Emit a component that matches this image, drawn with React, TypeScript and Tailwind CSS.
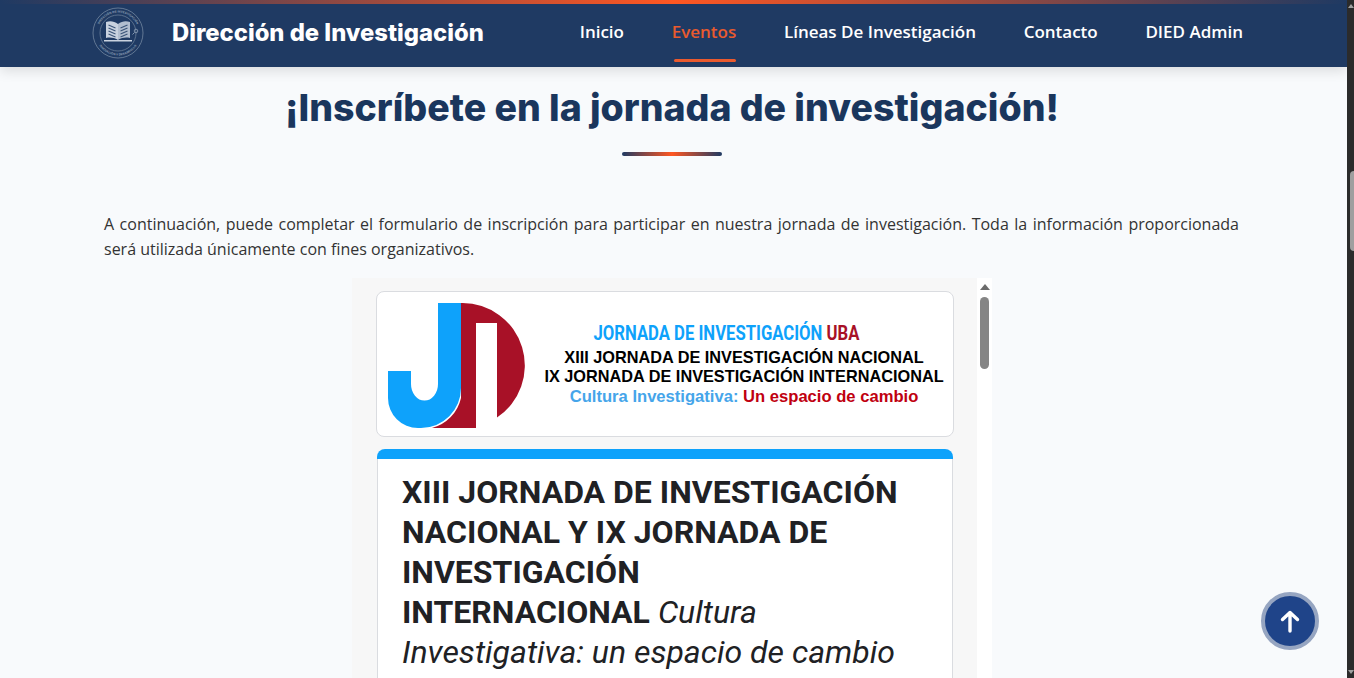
import React from "react";

function Seal() {
  return (
    <svg width="52" height="52" viewBox="0 0 52 52" className="shrink-0">
      <defs>
        <path id="sealTop" d="M5.500 26a20.500 20.500 0 0 1 41 0" />
        <path id="sealBottom" d="M3.500 26a22.500 22.500 0 0 0 45 0" />
      </defs>
      <circle cx="26" cy="26" r="25" fill="none" stroke="#72869f" strokeWidth="0.8" />
      <circle cx="26" cy="26" r="18" fill="none" stroke="#72869f" strokeWidth="0.7" />
      <text fontSize="3" fill="#8fa1b8" fontFamily="'Liberation Sans', sans-serif" fontWeight="700" textAnchor="middle">
        <textPath href="#sealTop" startOffset="50%">DIRECCIÓN DE INVESTIGACIÓN</textPath>
      </text>
      <text fontSize="3" fill="#8fa1b8" fontFamily="'Liberation Sans', sans-serif" fontWeight="700" textAnchor="middle">
        <textPath href="#sealBottom" startOffset="50%">INNOVACIÓN Y DESARROLLO</textPath>
      </text>
      <path d="M14 15c4-1.500 8-1 12 2v16c-4-2.500-8-3-12-2z" fill="#c9d2df" />
      <path d="M38 15c-4-1.500-8-1-12 2v16c4-2.500 8-3 12-2z" fill="#b2becf" />
      <path d="M16.500 18l7 3M16.500 21l7 3M16.500 24l7 3M16.500 27l7 3M35.500 18l-7 3M35.500 21l-7 3M35.500 24l-7 3M35.500 27l-7 3" stroke="#3a5478" strokeWidth="1.100" />
      <path d="M12 33h28v1.500H12z" fill="#c9d2df" />
      <circle cx="44" cy="24" r="1.800" fill="none" stroke="#8fa1b8" strokeWidth="0.8" />
      <path d="M42.500 25.500l-2 2" stroke="#8fa1b8" strokeWidth="0.9" />
    </svg>
  );
}

function JLogo() {
  return (
    <svg width="138" height="126" viewBox="387 303 138 126" className="mt-1 shrink-0">
      <path d="M461 303h1a62.500 62.500 0 0 1 35 114.500V323h-21v105h-44a40 40 0 0 0 29-30z" fill="#a81127" />
      <path d="M438 303h23v85a40 40 0 0 1-40 40h-3a30 30 0 0 1-30-30v-27h23v13a13.500 16.500 0 0 0 27 0z" fill="#0ea2fb" />
    </svg>
  );
}

function NavLink({ label, active }: { label: string; active?: boolean }) {
  return (
    <a className={active ? "relative -mt-[4px] text-[#ea5a2e]" : "relative -mt-[4px] text-white"}>
      {label}
      {active && <span className="absolute left-[2px] right-0 top-[36px] h-[3px] rounded-sm bg-[#ea5a2e]" />}
    </a>
  );
}

export default function App() {
  return (
    <div className="flex h-[678px] w-full overflow-hidden bg-[#f8fafc] font-['Open_Sans',sans-serif]">
      <main className="relative h-full min-w-0 flex-1 overflow-hidden">
        <header className="relative z-10 h-[67px] bg-[#1f3a63] shadow-[0_4px_12px_rgba(0,0,0,0.12)]">
          <div className="h-1 bg-[linear-gradient(90deg,#1f3a63,#ff5722,#1f3a63)]" />
          <div className="flex h-[58px] items-center pl-[92px]">
            <Seal />
            <span className="ml-7 font-['Inter',sans-serif] text-[23.800px] font-extrabold leading-none text-white">
              Dirección de Investigación
            </span>
            <nav className="ml-auto mr-[104px] flex gap-[47.700px] text-[17px] font-semibold leading-none">
              <NavLink label="Inicio" />
              <NavLink label="Eventos" active />
              <NavLink label="Líneas De Investigación" />
              <NavLink label="Contacto" />
              <NavLink label="DIED Admin" />
            </nav>
          </div>
        </header>

        <section className="ml-[104px] w-[1136px]">
          <h1 className="mt-[19px] text-center font-['Inter',sans-serif] text-[37.500px] font-extrabold leading-[44px] text-[#1a365d]">
            ¡Inscríbete en la jornada de investigación!
          </h1>
          <div className="mx-auto mt-[22px] h-1 w-[100px] rounded-sm bg-[linear-gradient(90deg,#1f3a63,#ff5722,#1f3a63)]" />
          <p className="mr-px mt-[56px] text-justify text-base leading-[25px] text-[#333333]">
            A continuación, puede completar el formulario de inscripción para participar en nuestra jornada de investigación. Toda la información proporcionada será utilizada únicamente con fines organizativos.
          </p>

          <div className="mx-auto mt-[16px] flex h-[500px] w-[640px] bg-[#f7f7f7]">
            <div className="min-w-0 flex-1 pl-6 pr-[23px] pt-[13px]">
              <div className="flex h-[146px] items-center rounded-lg border border-[#dadce0] bg-white pl-[10px]">
                <JLogo />
                <div className="ml-[19px] flex w-[400px] flex-col items-center font-['Liberation_Sans',sans-serif] text-[16.300px] font-bold text-black">
                  <span className="-translate-x-[18px] -translate-y-[2px] scale-x-[0.834] whitespace-nowrap font-['Roboto',sans-serif] text-[20px] leading-[26px] text-[#0ea2fb]">
                    JORNADA DE INVESTIGACIÓN <span className="text-[#a81127]">UBA</span>
                  </span>
                  <span className="whitespace-nowrap leading-[19px]">XIII JORNADA DE INVESTIGACIÓN NACIONAL</span>
                  <span className="whitespace-nowrap leading-[19px]">IX JORNADA DE INVESTIGACIÓN INTERNACIONAL</span>
                  <span className="translate-y-px whitespace-nowrap text-[16.600px] leading-[20px] text-[#45a5ea]">
                    Cultura Investigativa: <span className="text-[#c00010]">Un espacio de cambio</span>
                  </span>
                </div>
              </div>
              <div className="mx-px mt-3 overflow-hidden rounded-t-lg">
                <div className="h-[10px] bg-[#0ea2fb]" />
                <h2 className="border-x border-[#dadce0] bg-white px-6 pb-12 pt-[13px] font-['Roboto',sans-serif] text-[32px] leading-10 text-[#202124]">
                  <strong className="font-bold">
                    XIII JORNADA DE INVESTIGACIÓN NACIONAL Y IX JORNADA DE INVESTIGACIÓN
                    <br />
                    INTERNACIONAL
                  </strong>{" "}
                  <em className="font-normal">Cultura Investigativa: un espacio de cambio</em>
                </h2>
              </div>
            </div>
            <div className="flex w-[15px] shrink-0 flex-col items-center bg-white pt-[6px]">
              <span className="h-0 w-0 border-x-[5px] border-b-[6px] border-x-transparent border-b-[#6b6b6b]" />
              <span className="mt-[7px] h-[72px] w-[9px] rounded-full bg-[#858585]" />
            </div>
          </div>
        </section>

        <button className="absolute left-[1261px] top-[592px] flex h-[58px] w-[58px] items-center justify-center rounded-full border-4 border-[#96a5c1] bg-[#1f4489] text-white">
          <svg width="24" height="24" viewBox="0 0 24 24" fill="none" stroke="currentColor" strokeWidth="3.400" strokeLinecap="round" strokeLinejoin="round">
            <path d="M12 22V3.500M4.500 10.500 12 3.500l7.500 7" />
          </svg>
        </button>
      </main>

      <aside className="flex h-full w-[7px] shrink-0 flex-col items-end bg-[#2b2b2b]">
        <span className="mt-[4px] h-0 w-0 border-x-[3px] border-b-[4px] border-x-transparent border-b-[#a0a0a0]" />
        <span className="mt-[163px] h-[80px] w-[4px] rounded-l-sm bg-[#9f9f9f]" />
        <span className="mb-[4px] mt-auto h-0 w-0 border-x-[3px] border-t-[4px] border-x-transparent border-t-[#a0a0a0]" />
      </aside>
    </div>
  );
}
